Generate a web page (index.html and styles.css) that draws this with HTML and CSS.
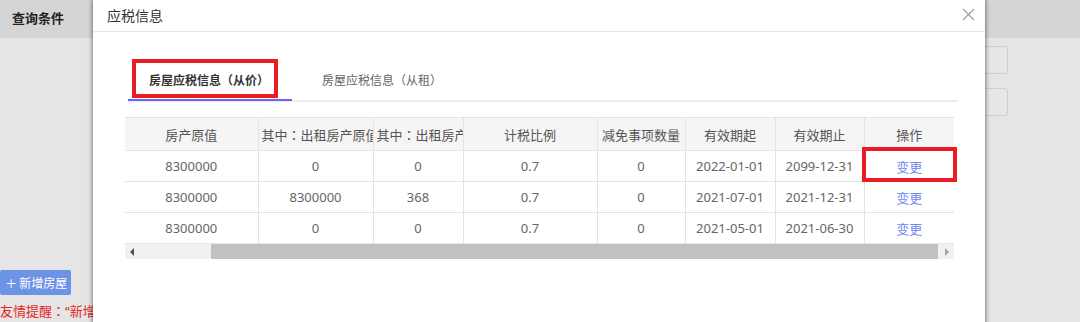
FILE: index.html
```html
<!DOCTYPE html>
<html lang="zh-CN">
<head>
    <meta charset="UTF-8">
    <title>应税信息</title>
    <link rel="stylesheet" href="styles.css">
</head>
<body>
<div class="page">
    <div class="topbar">查询条件</div>
    <div class="content">
        <div class="left-col">
            <button class="btn-add"><span class="plus">+</span>新增房屋</button>
            <p class="tip" lang="zh-TW">友情提醒：“新增房屋”</p>
        </div>
        <div class="right-col">
            <input class="field" type="text">
            <input class="field" type="text">
        </div>
    </div>
</div>

<!-- 弹窗 -->
<div class="modal">
    <div class="modal-head">
        <span class="modal-title">应税信息</span>
        <svg class="close" width="13" height="13" viewBox="0 0 13 13">
            <path d="M1 1 L12 12 M12 1 L1 12" stroke="#9a9a9a" stroke-width="1.1" fill="none"/>
        </svg>
    </div>
    <div class="modal-body">
        <ul class="tabs" lang="zh-TW">
            <li class="tab active">房屋应税信息（从价）</li>
            <li class="tab">房屋应税信息（从租）</li>
        </ul>
        <div class="mark mark-tab"></div>

        <div class="grid">
            <table class="tbl">
                <colgroup>
                    <col style="width:133px">
                    <col style="width:115px">
                    <col style="width:90px">
                    <col style="width:134px">
                    <col style="width:88px">
                    <col style="width:90px">
                    <col style="width:89px">
                    <col style="width:90px">
                </colgroup>
                <thead lang="zh-TW">
                    <tr>
                        <th>房产原值</th>
                        <th>其中：出租房产原值</th>
                        <th>其中：出租房产面积</th>
                        <th>计税比例</th>
                        <th>减免事项数量</th>
                        <th>有效期起</th>
                        <th>有效期止</th>
                        <th>操作</th>
                    </tr>
                </thead>
                <tbody>
                    <tr>
                        <td>8300000</td><td>0</td><td>0</td><td>0.7</td><td>0</td>
                        <td>2022-01-01</td><td>2099-12-31</td><td><a class="lnk">变更</a></td>
                    </tr>
                    <tr>
                        <td>8300000</td><td>8300000</td><td>368</td><td>0.7</td><td>0</td>
                        <td>2021-07-01</td><td>2021-12-31</td><td><a class="lnk">变更</a></td>
                    </tr>
                    <tr>
                        <td>8300000</td><td>0</td><td>0</td><td>0.7</td><td>0</td>
                        <td>2021-05-01</td><td>2021-06-30</td><td><a class="lnk">变更</a></td>
                    </tr>
                </tbody>
            </table>
            <div class="hscroll">
                <span class="arrow arrow-l"></span>
                <span class="thumb"></span>
                <span class="arrow arrow-r"></span>
            </div>
            <div class="mark mark-cell"></div>
        </div>
    </div>
</div>
</body>
</html>
```

FILE: styles.css
```css
body {
    margin: 0;
    width: 1080px;
    height: 322px;
    overflow: hidden;
    font-family: "Noto Sans", "Noto Sans CJK SC", sans-serif;
    background: #e5e5e5;
    position: relative;
}

.topbar {
    height: 38px;
    line-height: 37px;
    padding-left: 12px;
    background: #d5d5d5;
    font-size: 13px;
    font-weight: bold;
    color: #222;
}

.content {
    display: flex;
    justify-content: space-between;
}

.left-col {
    padding-top: 232px;
}

.btn-add {
    display: flex;
    align-items: center;
    height: 25px;
    width: 71px;
    padding: 0 0 0 6px;
    border: none;
    border-radius: 2px;
    background: #6d93e6;
    color: #fff;
    font-family: inherit;
    font-size: 12px;
}

.plus {
    font-size: 18px;
    font-weight: 300;
    line-height: 1;
    margin-right: 3px;
}

.tip {
    margin: 6px 0 0;
    font-family: "Noto Sans", "Noto Sans CJK TC", sans-serif;
    font-size: 13px;
    color: #e61e1e;
    white-space: nowrap;
}

.right-col {
    display: flex;
    flex-direction: column;
    gap: 14px;
    padding-top: 8px;
    margin-right: 72px;
}

.field {
    width: 200px;
    height: 28px;
    box-sizing: border-box;
    border: 1px solid #cfcfcf;
    border-radius: 3px;
    background: #e6e6e6;
}

/* modal */
.modal {
    position: absolute;
    left: 93px;
    top: 0;
    width: 892px;
    height: 340px;
    background: #fff;
    box-shadow: 0 0 4px 1px rgba(0, 0, 0, 0.45);
}

.modal-head {
    display: flex;
    justify-content: space-between;
    align-items: center;
    height: 31px;
    padding: 0 10px 0 14px;
    border-bottom: 1px solid #e6e6e6;
}

.modal-title {
    font-size: 14px;
    color: #333;
    margin-top: -2px;
}

.close {
    margin-top: -3px;
}

.modal-body {
    position: relative;
    padding: 28px 27px 0 32px;
}

.tabs {
    list-style-type: none;
    display: flex;
    margin: 0 0 0 3px;
    padding: 0;
    height: 40px;
    border-bottom: 2px solid #ececec;
    font-family: "Noto Sans", "Noto Sans CJK TC", sans-serif;
}

.tab {
    padding: 0 23px 0 21px;
    line-height: 42px;
    font-size: 12px;
    color: #666;
}

.tab + .tab {
    padding-left: 30px;
}

.tab.active {
    font-weight: bold;
    color: #333;
    border-bottom: 2px solid #6f62f2;
    height: 39px;
}

.mark {
    position: absolute;
    border: 4px solid #ec1c24;
}

.mark-tab {
    left: 39px;
    top: 27px;
    width: 138px;
    height: 31px;
}

.grid {
    position: relative;
    width: 829px;
    margin-top: 15px;
}

.tbl {
    table-layout: fixed;
    border-collapse: collapse;
    width: 829px;
    font-size: 13px;
    color: #666;
}

.tbl th,
.tbl td {
    border: 1px solid #e3e3e3;
    text-align: center;
    white-space: nowrap;
    overflow: hidden;
    padding: 0 3px;
}

.tbl tr > :first-child {
    border-left: none;
}

.tbl tr > :last-child {
    border-right: none;
}

.tbl th {
    height: 32px;
    font-family: "Noto Sans", "Noto Sans CJK TC", sans-serif;
    font-weight: normal;
    color: #555;
    background: #f5f5f5;
}

.tbl td {
    height: 30px;
}

.lnk {
    color: #7088f0;
    cursor: pointer;
}

.hscroll {
    display: flex;
    align-items: center;
    height: 15px;
    background: #f1f1f1;
}

.arrow {
    width: 0;
    height: 0;
    border-top: 4px solid transparent;
    border-bottom: 4px solid transparent;
}

.arrow-l {
    border-right: 4px solid #505050;
    margin: 0 77px 0 5px;
}

.arrow-r {
    border-left: 4px solid #a3a3a3;
    margin: 0 5px 0 7px;
}

.thumb {
    flex: 1;
    height: 15px;
    background: #c1c1c1;
}

.mark-cell {
    left: 737px;
    top: 30px;
    width: 87px;
    height: 27px;
}
```
